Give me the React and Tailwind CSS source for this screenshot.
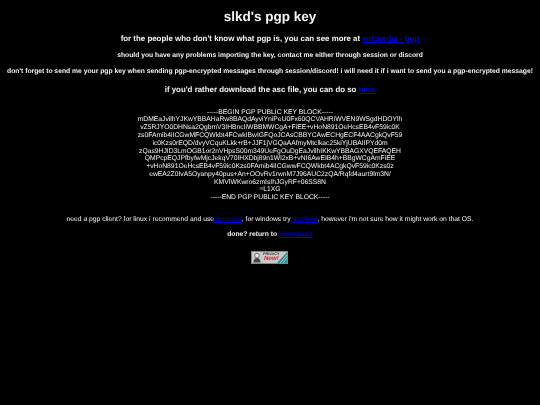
const KEY = [
  "-----BEGIN PGP PUBLIC KEY BLOCK-----",
  "mDMEaJvilhYJKwYBBAHaRw8BAQdAyviYniPeU0Fx60QCVAHRiWVEN9WSgdHDOYlh",
  "vZ5RJYO0DHNsa2QgbmV3IHBncIiWBBMWCgA+FiEE+vHoN891OeHcsEB4vF59ic0K",
  "zs0FAmib4iICGwMFCQWkbt4FCwkIBwIGFQoJCAsCBBYCAwECHgECF4AACgkQvF59",
  "ic0Kzs0rEQD/dvyVCquKLkk+rB+JJF1jVGQaAAfmyMtclkac25kiYjUBAIIPYd0m",
  "zQas9HJID3LmOGB1or2nVHpsS00m349UeFgOuDgEaJvilhIKKwYBBAGXVQEFAQEH",
  "QMPcpEQJPfbyfwMjcJekqV70IHXDbj89n1Wl2xB+vNI6AwEIB4h+BBgWCgAmFiEE",
  "+vHoN891OeHcsEB4vF59ic0Kzs0FAmib4iICGwwFCQWkbt4ACgkQvF59ic0Kzs0z",
  "ewEA2Z0IvA5Oyanpy40pus+An+OOvRv1rwnM7J96AUC2zQA/Rqfd4aurt9lm3N/",
  "KMVIWKwro6zmIsIhJGyRF+06SS8N",
  "=L1XG",
  "-----END PGP PUBLIC KEY BLOCK-----",
];

function A({ children }) {
  return <a href="#" className="text-[#0000d8] underline">{children}</a>;
}

function Badge() {
  return (
    <div className="relative flex h-[13px] w-[37px] items-center overflow-hidden border border-[#888] bg-[#c8c8c8]">
      <svg width="10" height="11" viewBox="0 0 10 11" className="shrink-0">
        <circle cx="5" cy="3.6" r="2.3" fill="#e8e8e8" stroke="#444" strokeWidth="0.7" />
        <path d="M1.5 10.5c0-3 1.3-4.5 3.5-4.5s3.5 1.5 3.5 4.5z" fill="#444" />
      </svg>
      <div className="ml-[1px] flex flex-col items-center leading-[5px]">
        <span className="text-[3.8px] font-bold text-[#333]">PRIVACY</span>
        <span className="text-[6px] font-bold italic text-[#e0182a]">Now!</span>
      </div>
      <svg width="10" height="11" viewBox="0 0 10 11" className="absolute bottom-0 right-0">
        <path d="M10 0v11H0z" fill="#2f8a92" />
        <path d="M3 11l7-8M6 11l4-5" stroke="#c9e6e6" strokeWidth="0.8" />
      </svg>
    </div>
  );
}

export default function App() {
  return (
    <div className="flex min-h-[405px] flex-col items-center bg-black text-center font-['Liberation_Sans',Arial,sans-serif] text-[#f4f4f4] blur-[0.35px] [text-rendering:geometricPrecision]">
      <h1 className="mt-[9px] text-[13.5px] leading-[15.5px] font-bold">slkd's pgp key</h1>
      <h3 className="mt-[9px] text-[7.9px] leading-[9.1px] font-bold">
        for the people who don't know what pgp is, you can see more at <A>wikipedia - pgp</A>
      </h3>
      <h4 className="mt-[9px] text-[6.75px] leading-[7.76px] font-bold">
        should you have any problems importing the key, contact me either through session or discord
      </h4>
      <h4 className="mt-[9px] text-[6.75px] leading-[7.76px] font-bold">
        don't forget to send me your pgp key when sending pgp-encrypted messages through session/discord! i will need it if i want to send you a pgp-encrypted message!
      </h4>
      <h3 className="mt-[9px] text-[7.9px] leading-[9.1px] font-bold">
        if you'd rather download the asc file, you can do so <A>here</A>
      </h3>
      <div className="mt-[14.5px] text-[6.75px] leading-[7.76px]">
        {KEY.map((l) => (
          <div key={l}>{l}</div>
        ))}
      </div>
      <p className="mt-[14.5px] text-[6.75px] leading-[7.76px]">
        need a pgp client? for linux i recommend and use<A>cleopatra</A>, for windows try <A>gpg4win</A>, however i'm not sure how it might work on that OS.
      </p>
      <p className="mt-[7px] text-[6.75px] leading-[7.76px] font-bold">
        done? return to <A>homepage</A>
      </p>
      <div className="mt-[12px] mr-[1px]">
        <Badge />
      </div>
    </div>
  );
}
